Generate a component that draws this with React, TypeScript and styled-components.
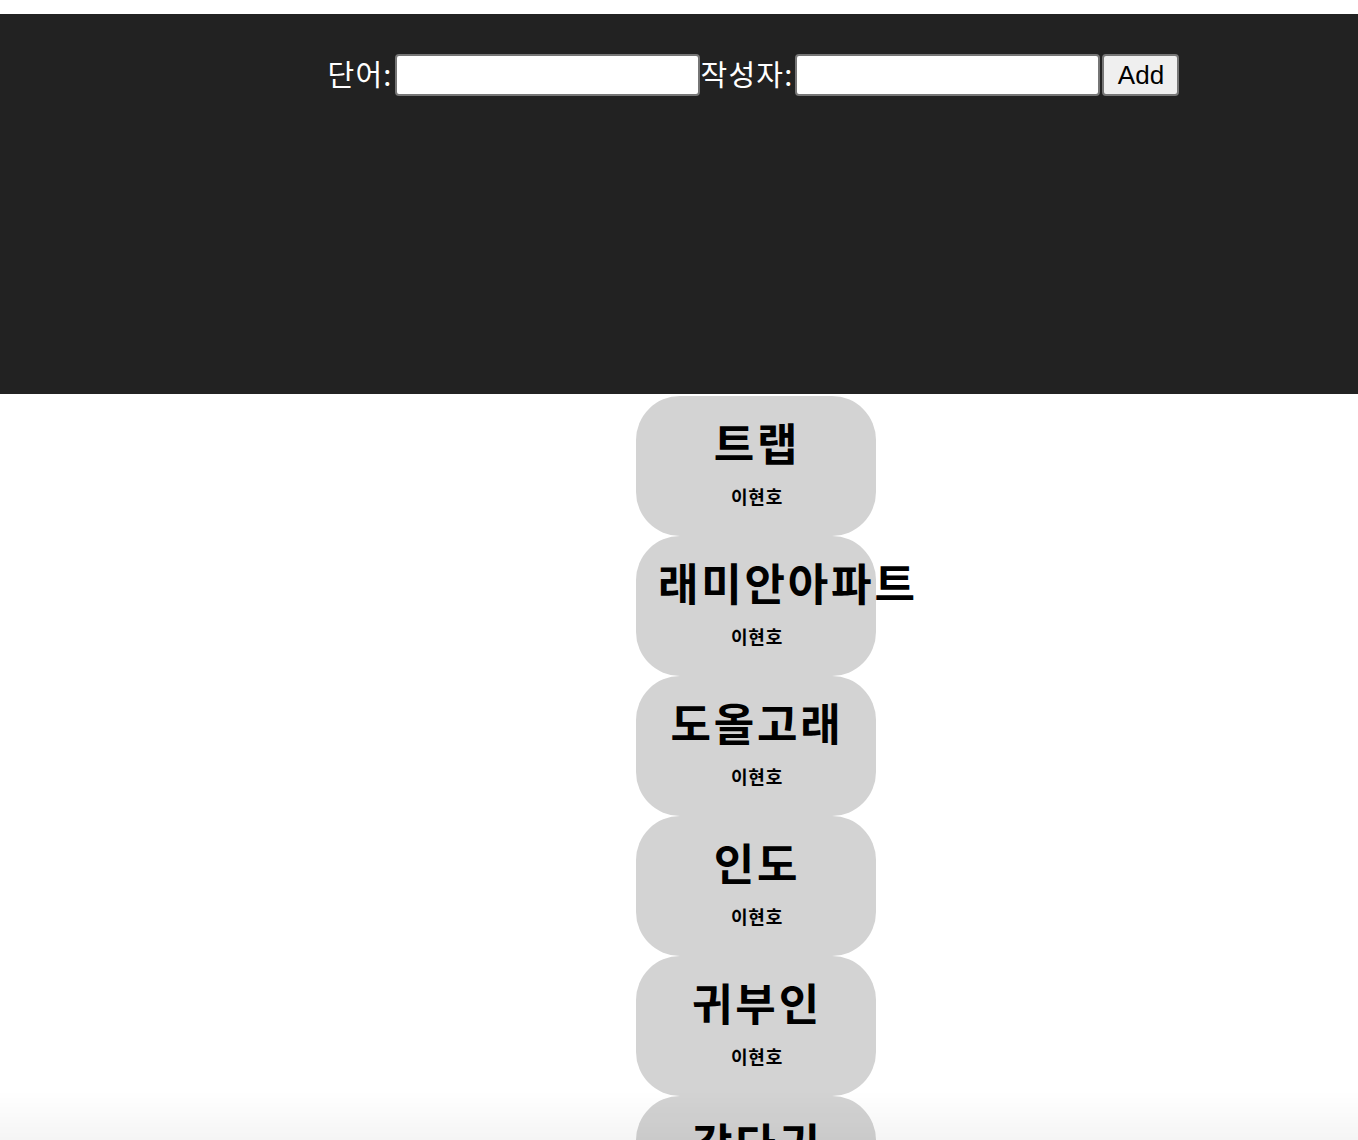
import React from "react";
import styled, { createGlobalStyle } from "styled-components";

const GlobalStyle = createGlobalStyle`
  html, body {
    margin: 0;
    padding: 0;
    background: #ffffff;
  }
  body {
    font-family: "Noto Sans CJK KR", "Noto Sans", sans-serif;
  }
`;

const Page = styled.div`
  padding-top: 14px;
`;

const Header = styled.header`
  background: #222222;
  height: 380px;
  box-sizing: border-box;
  padding: 40px 0 0 149px;
  display: flex;
  justify-content: center;
  align-items: flex-start;
`;

const Form = styled.form`
  display: flex;
  align-items: center;
  height: 42px;
`;

const Label = styled.label`
  color: #ffffff;
  font-family: "Noto Sans CJK KR", sans-serif;
  font-size: 29px;
  letter-spacing: 1.2px;
  line-height: 42px;
  margin-top: -5px;
  white-space: nowrap;
`;

const Input = styled.input`
  box-sizing: border-box;
  width: 305px;
  height: 42px;
  margin: 0 1px 0 2px;
  border: 2px solid #767676;
  border-radius: 4px;
  background: #ffffff;
  font-size: 26px;
  padding: 1px 4px;
`;

const Button = styled.button`
  box-sizing: border-box;
  width: 77px;
  height: 42px;
  margin-left: 1px;
  border: 2px solid #767676;
  border-radius: 4px;
  background: #efefef;
  color: #000000;
  font-family: "Liberation Sans", Arial, sans-serif;
  font-size: 26px;
  padding: 0;
`;

const List = styled.main`
  padding: 2px 0 0 154px;
  display: flex;
  flex-direction: column;
  align-items: center;
`;

const Card = styled.div`
  box-sizing: border-box;
  width: 240px;
  height: 140px;
  background: #d3d3d3;
  border-radius: 44px;
  padding: 20px 20px 0 22px;
  text-align: center;
`;

const Title = styled.h2`
  margin: 0;
  font-family: "Noto Sans CJK KR", sans-serif;
  font-weight: 700;
  font-size: 44px;
  letter-spacing: 2.8px;
  line-height: 52px;
  white-space: nowrap;
  color: #000000;
`;

const Author = styled.p`
  margin: 16px 0 0;
  font-family: "Noto Sans CJK KR", sans-serif;
  font-weight: 700;
  font-size: 18px;
  letter-spacing: 0.8px;
  line-height: 24px;
  color: #000000;
`;

const BottomFade = styled.div`
  position: fixed;
  left: 0;
  right: 0;
  bottom: 0;
  height: 50px;
  pointer-events: none;
  background: linear-gradient(to bottom, rgba(0, 0, 0, 0), rgba(0, 0, 0, 0.04));
`;

const words = ["트랩", "래미안아파트", "도올고래", "인도", "귀부인", "각다귀", "사과"];

export default function App() {
  return (
    <Page>
      <GlobalStyle />
      <Header>
        <Form onSubmit={(e) => e.preventDefault()}>
          <Label>단어:</Label>
          <Input type="text" />
          <Label>작성자:</Label>
          <Input type="text" />
          <Button type="submit">Add</Button>
        </Form>
      </Header>
      <List>
        {words.map((w) => (
          <Card key={w}>
            <Title>{w}</Title>
            <Author>이현호</Author>
          </Card>
        ))}
      </List>
      <BottomFade />
    </Page>
  );
}
